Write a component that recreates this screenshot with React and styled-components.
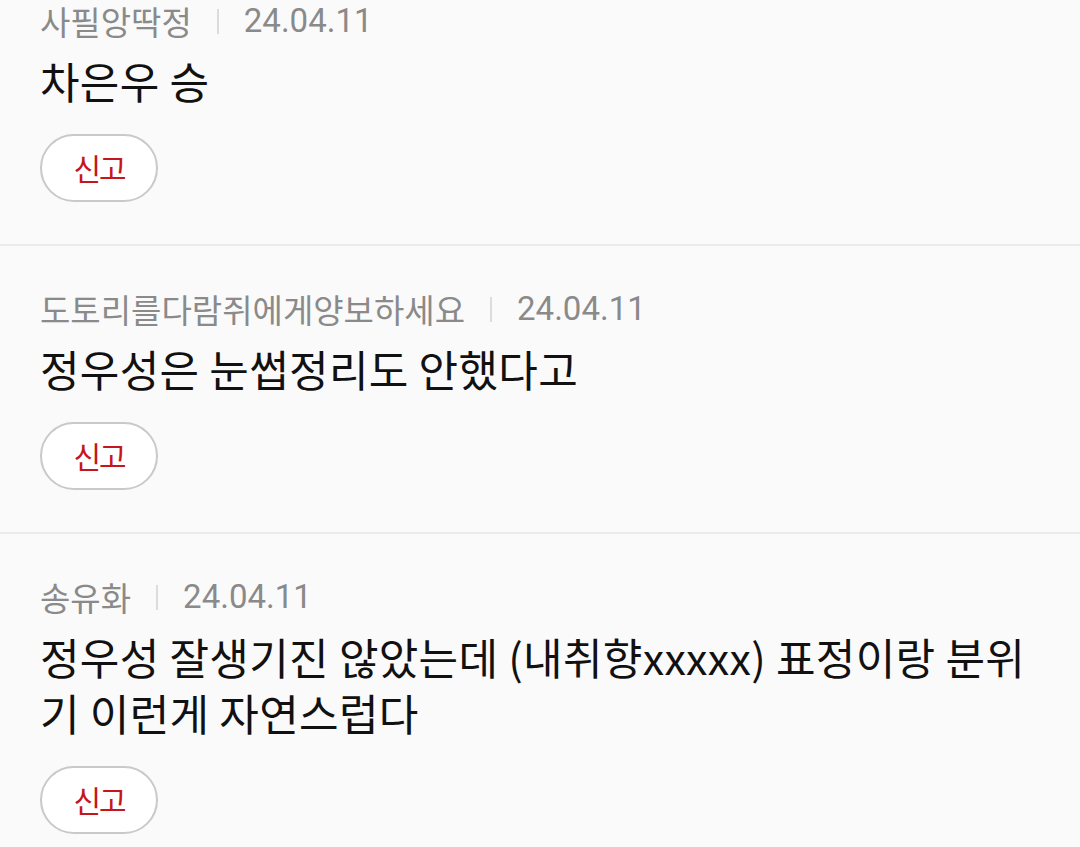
import React from "react";
import styled, { createGlobalStyle } from "styled-components";

const Global = createGlobalStyle`
  html, body { margin: 0; padding: 0; background: #fafafa; }
  body { font-family: Roboto, "Noto Sans CJK KR", sans-serif; -webkit-font-smoothing: antialiased; }
`;

const List = styled.div`
  width: 1080px;
  background: #fafafa;
`;

const Item = styled.section`
  padding: 43px 40px 42px;
  border-bottom: 2px solid #ebebeb;
  &:first-child { padding-top: 1px; }
`;

const Meta = styled.div`
  display: flex;
  align-items: center;
  height: 40px;
  line-height: 40px;
  font-size: 33px;
  color: #8a8a8a;
`;

const Author = styled.span`
  font-family: "Noto Sans CJK KR", sans-serif;
`;

const Sep = styled.span`
  width: 2px;
  height: 25px;
  background: #dcdcdc;
  margin: 0 25px;
`;

const DateText = styled.span`
  font-family: Roboto, sans-serif;
  font-size: 33px;
`;

const Body = styled.p`
  margin: 11px 0 0;
  font-family: "Noto Sans CJK KR", sans-serif;
  font-size: 43px;
  line-height: 56px;
  letter-spacing: 0.3px;
  color: #111;
  word-break: break-all;
`;

const ReportButton = styled.button`
  display: flex;
  align-items: center;
  justify-content: center;
  margin-top: 26px;
  width: 118px;
  height: 68px;
  box-sizing: border-box;
  border: 2px solid #c9c9c9;
  border-radius: 34px;
  background: #fff;
  color: #c4161c;
  font-family: "Noto Sans CJK KR", sans-serif;
  font-size: 30px;
  letter-spacing: -2px;
  padding: 0 0 2px;
`;

const comments = [
  { author: "사필앙딱정", date: "24.04.11", text: "차은우 승" },
  { author: "도토리를다람쥐에게양보하세요", date: "24.04.11", text: "정우성은 눈썹정리도 안했다고" },
  {
    author: "송유화",
    date: "24.04.11",
    text: "정우성 잘생기진 않았는데 (내취향xxxxx) 표정이랑 분위기 이런게 자연스럽다",
  },
];

export default function App() {
  return (
    <>
      <Global />
      <List>
        {comments.map((c, i) => (
          <Item key={i}>
            <Meta>
              <Author>{c.author}</Author>
              <Sep />
              <DateText>{c.date}</DateText>
            </Meta>
            <Body>{c.text}</Body>
            <ReportButton>신고</ReportButton>
          </Item>
        ))}
      </List>
    </>
  );
}
